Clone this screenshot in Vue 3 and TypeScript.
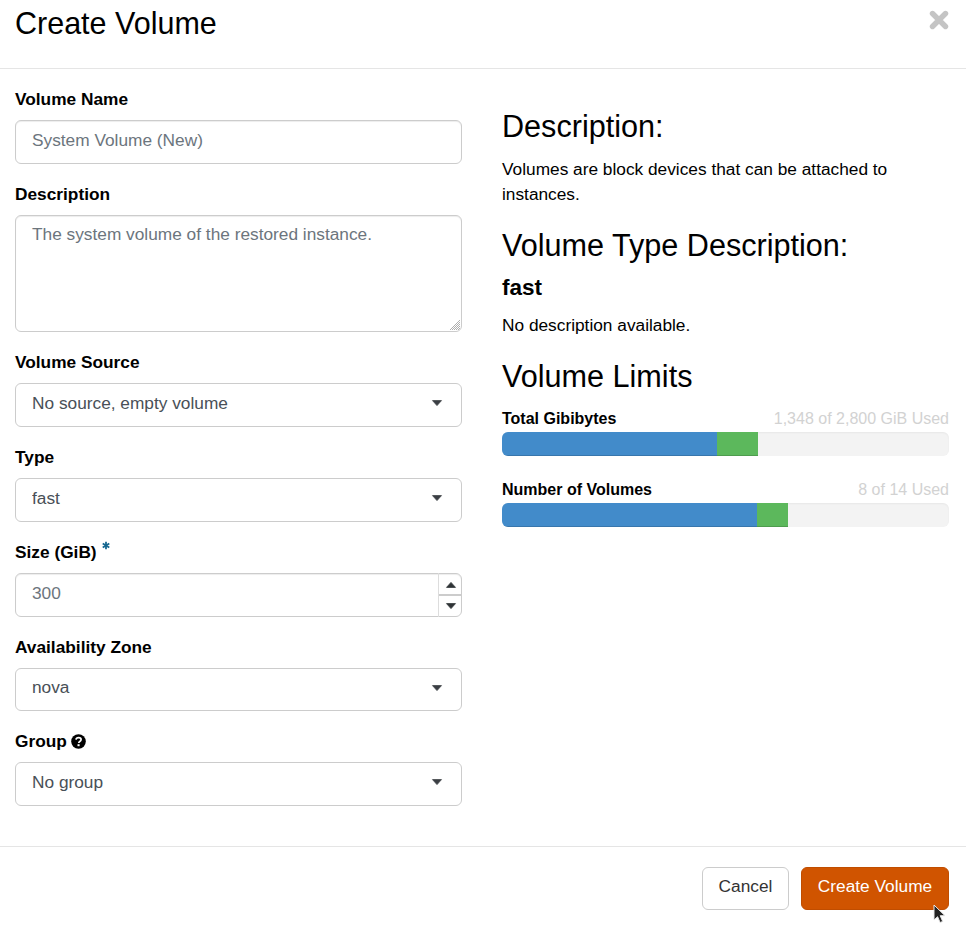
<script setup lang="ts">
interface Field { label: string; options: string[] }
const volumeSource: Field = { label: 'Volume Source', options: ['No source, empty volume'] }
const volumeType: Field = { label: 'Type', options: ['fast'] }
const zone: Field = { label: 'Availability Zone', options: ['nova'] }
const group: Field = { label: 'Group', options: ['No group'] }
const limits = [
  { name: 'Total Gibibytes', used: '1,348 of 2,800 GiB Used', blue: 48.1, green: 9.1 },
  { name: 'Number of Volumes', used: '8 of 14 Used', blue: 57.1, green: 6.9 },
]
</script>

<template>
  <div class="modal">
    <header class="head">
      <h1 class="title">Create Volume</h1>
      <svg class="close" width="20" height="20" viewBox="0 0 20 20" aria-label="Close">
        <path d="M3.5 3.5 16.5 16.5M16.5 3.5 3.5 16.5" stroke="#c4c4c4" stroke-width="5.4" stroke-linecap="round" />
      </svg>
    </header>

    <main class="body">
      <form class="left">
        <div class="group">
          <label class="lbl">Volume Name</label>
          <input class="ctl" placeholder="System Volume (New)" />
        </div>
        <div class="group">
          <label class="lbl">Description</label>
          <div class="area-wrap">
            <textarea class="ctl area" placeholder="The system volume of the restored instance."></textarea>
            <svg class="grip" width="12" height="12" viewBox="0 0 12 12">
              <path d="M1 11 11 1M3 11 11 3M5 11 11 5M7 11 11 7M9 11 11 9" stroke="#9a9a9a" stroke-width=".8" fill="none" />
            </svg>
          </div>
        </div>
        <div class="group">
          <label class="lbl">{{ volumeSource.label }}</label>
          <div class="select-wrap">
            <select class="ctl sel"><option v-for="o in volumeSource.options" :key="o">{{ o }}</option></select>
            <svg class="caret" width="12" height="7" viewBox="0 0 12 7"><path d="M1.500 .6h9L6 5.600z" fill="#3b3f44" stroke="#3b3f44" stroke-width=".8" stroke-linejoin="round" /></svg>
          </div>
        </div>
        <div class="group">
          <label class="lbl">{{ volumeType.label }}</label>
          <div class="select-wrap">
            <select class="ctl sel"><option v-for="o in volumeType.options" :key="o">{{ o }}</option></select>
            <svg class="caret" width="12" height="7" viewBox="0 0 12 7"><path d="M1.500 .6h9L6 5.600z" fill="#3b3f44" stroke="#3b3f44" stroke-width=".8" stroke-linejoin="round" /></svg>
          </div>
        </div>
        <div class="group">
          <label class="lbl">Size (GiB)
            <svg class="star" width="8" height="9" viewBox="0 0 9 10"><path d="M4.5 .8v8.4M.8 2.8l7.4 4.4M8.2 2.8.8 7.2" stroke="#14668f" stroke-width="2" /></svg>
          </label>
          <div class="num-wrap">
            <input class="ctl num" type="text" placeholder="300" />
            <div class="spin">
              <span class="spin-btn"><svg width="12" height="7" viewBox="0 0 12 7"><path d="M1.500 6.400h9L6 1.400z" fill="#2f3336" stroke="#2f3336" stroke-width=".8" stroke-linejoin="round" /></svg></span>
              <span class="spin-btn"><svg width="12" height="7" viewBox="0 0 12 7"><path d="M1.500 .6h9L6 5.600z" fill="#2f3336" stroke="#2f3336" stroke-width=".8" stroke-linejoin="round" /></svg></span>
            </div>
          </div>
        </div>
        <div class="group">
          <label class="lbl">{{ zone.label }}</label>
          <div class="select-wrap">
            <select class="ctl sel"><option v-for="o in zone.options" :key="o">{{ o }}</option></select>
            <svg class="caret" width="12" height="7" viewBox="0 0 12 7"><path d="M1.500 .6h9L6 5.600z" fill="#3b3f44" stroke="#3b3f44" stroke-width=".8" stroke-linejoin="round" /></svg>
          </div>
        </div>
        <div class="group">
          <label class="lbl">{{ group.label }}
            <svg class="help" width="15" height="15" viewBox="0 0 15 15">
              <circle cx="7.5" cy="7.5" r="7.300" fill="#000" />
              <path d="M5 5.600c.2-1.400 1.200-2 2.600-2 1.500 0 2.500.8 2.500 2 0 1-.6 1.500-1.300 1.900-.7.400-1 .7-1 1.500" fill="none" stroke="#fff" stroke-width="1.700" />
              <rect x="6.500" y="10.200" width="2.100" height="2" fill="#fff" />
            </svg>
          </label>
          <div class="select-wrap">
            <select class="ctl sel"><option v-for="o in group.options" :key="o">{{ o }}</option></select>
            <svg class="caret" width="12" height="7" viewBox="0 0 12 7"><path d="M1.500 .6h9L6 5.600z" fill="#3b3f44" stroke="#3b3f44" stroke-width=".8" stroke-linejoin="round" /></svg>
          </div>
        </div>
      </form>

      <aside class="right">
        <h3 class="h3 first">Description:</h3>
        <p class="para">Volumes are block devices that can be attached to instances.</p>
        <h3 class="h3">Volume Type Description:</h3>
        <h4 class="h4">fast</h4>
        <p class="para">No description available.</p>
        <h3 class="h3 limits-title">Volume Limits</h3>
        <div v-for="l in limits" :key="l.name" class="limit">
          <div class="limit-row">
            <strong class="limit-name">{{ l.name }}</strong>
            <span class="limit-used">{{ l.used }}</span>
          </div>
          <div class="bar">
            <div class="seg blue" :style="{ width: l.blue + '%' }"></div>
            <div class="seg green" :style="{ width: l.green + '%' }"></div>
          </div>
        </div>
      </aside>
    </main>

    <footer class="foot">
      <button class="btn cancel" type="button">Cancel</button>
      <button class="btn primary" type="button">Create Volume</button>
      <svg class="cursor" width="15" height="22" viewBox="0 0 15 22">
        <path d="M1 1v15l3.600-3.300 2.500 5.800 2.600-1.100-2.500-5.700h4.800z" fill="#222" stroke="#e8e8e8" stroke-width="1" />
      </svg>
    </footer>
  </div>
</template>

<style>
html, body { margin: 0; background: #fff; overflow: hidden; }
</style>

<style scoped>
.modal {
  width: 966px;
  height: 926px;
  display: flex;
  flex-direction: column;
  font-family: "Liberation Sans", Arial, sans-serif;
  font-size: 17.3px;
  color: #000;
  overflow: hidden;
}
.head {
  height: 68px;
  box-sizing: border-box;
  flex: none;
  border-bottom: 1px solid transparent;
  box-shadow: 0 1px 0 #e5e5e5;
  padding: 5px 15px 0;
  display: flex;
  justify-content: space-between;
  align-items: flex-start;
}
.title { margin: 0; font-size: 30.5px; font-weight: 400; line-height: 36px; }
.close { margin: 5px 2px 0 0; }
.body {
  flex: 1;
  display: flex;
  gap: 40px;
  padding: 20px 17px 0 15px;
  min-height: 0;
}
.left, .right { width: 447px; flex: none; }
.group { margin-bottom: 19px; }
.lbl {
  display: block;
  font-weight: 700;
  line-height: 23px;
  margin-bottom: 9px;
  height: 23px;
}
.ctl {
  display: block;
  box-sizing: border-box;
  width: 100%;
  height: 43.75px;
  border: 1px solid #ccc;
  border-radius: 6px;
  padding: 0 16px 2px;
  font: 17.3px "Liberation Sans", Arial, sans-serif;
  color: #495057;
  background: #fff;
  outline: none;
  box-shadow: inset 0 1px 1px rgba(0,0,0,.075);
}
.ctl::placeholder { color: #6c757d; opacity: 1; }
.area-wrap { position: relative; padding-bottom: .7px; }
.area { height: 117px; padding: 8px 16px; resize: none; }
.grip { position: absolute; right: 1px; bottom: 1.7px; pointer-events: none; }
.select-wrap, .num-wrap { position: relative; }
.sel { appearance: none; -webkit-appearance: none; box-shadow: none; padding-bottom: 5px; }
.caret { position: absolute; right: 19px; top: 17px; pointer-events: none; }
.star { vertical-align: 8px; margin-left: 1px; }
.help { vertical-align: -2px; margin-left: -1px; }
.spin {
  position: absolute;
  right: 0; top: 0; bottom: 0;
  width: 24px;
  display: flex;
  flex-direction: column;
  border-left: 1px solid #ddd;
  box-sizing: border-box;
}
.spin-btn {
  flex: 1;
  display: flex;
  align-items: center;
  justify-content: center;
  border-top: 1px solid transparent;
}
.spin-btn + .spin-btn { border-top: 2px solid #ccc; }
.spin-btn svg { display: block; }
.right { padding-top: 1px; }
.h3 { margin: 22px 0 14px; font-size: 30.6px; font-weight: 400; line-height: 33px; }
.h3.first { margin-top: 21px; }
.h3.limits-title { margin-bottom: 15px; }
.h4 { margin: 0 0 13px; font-size: 22.5px; font-weight: 700; line-height: 24px; }
.para { margin: 0; line-height: 25px; }
.limit { margin-bottom: 23px; font-size: 16px; }
.limit-row { display: flex; justify-content: space-between; line-height: 22px; height: 22px; margin-bottom: 2px; }
.limit-name { font-weight: 700; }
.limit-used { color: #d2d2d2; }
.bar {
  height: 24px;
  background: #f3f3f3;
  border-radius: 6px;
  overflow: hidden;
  display: flex;
  box-shadow: inset 0 1px 2px rgba(0,0,0,.05);
}
.seg { height: 100%; box-shadow: inset 0 -1px 0 rgba(0,0,0,.15); }
.blue { background: #428bca; }
.green { background: #5cb85c; }
.foot {
  position: relative;
  box-sizing: border-box;
  height: 80px;
  flex: none;
  border-top: 1px solid #e5e5e5;
  display: flex;
  justify-content: flex-end;
  align-items: flex-start;
  gap: 12px;
  padding: 20px 17px 0 0;
}
.btn {
  height: 43px;
  border-radius: 6px;
  font: 17.3px "Liberation Sans", Arial, sans-serif;
  padding: 0 0 5px;
  border: 1px solid #ccc;
}
.cancel { background: #fff; color: #333; width: 87px; }
.primary { background: #d05400; border-color: #c04d00; color: #fff; width: 148px; }
.cursor { position: absolute; left: 933px; top: 57px; }
</style>
